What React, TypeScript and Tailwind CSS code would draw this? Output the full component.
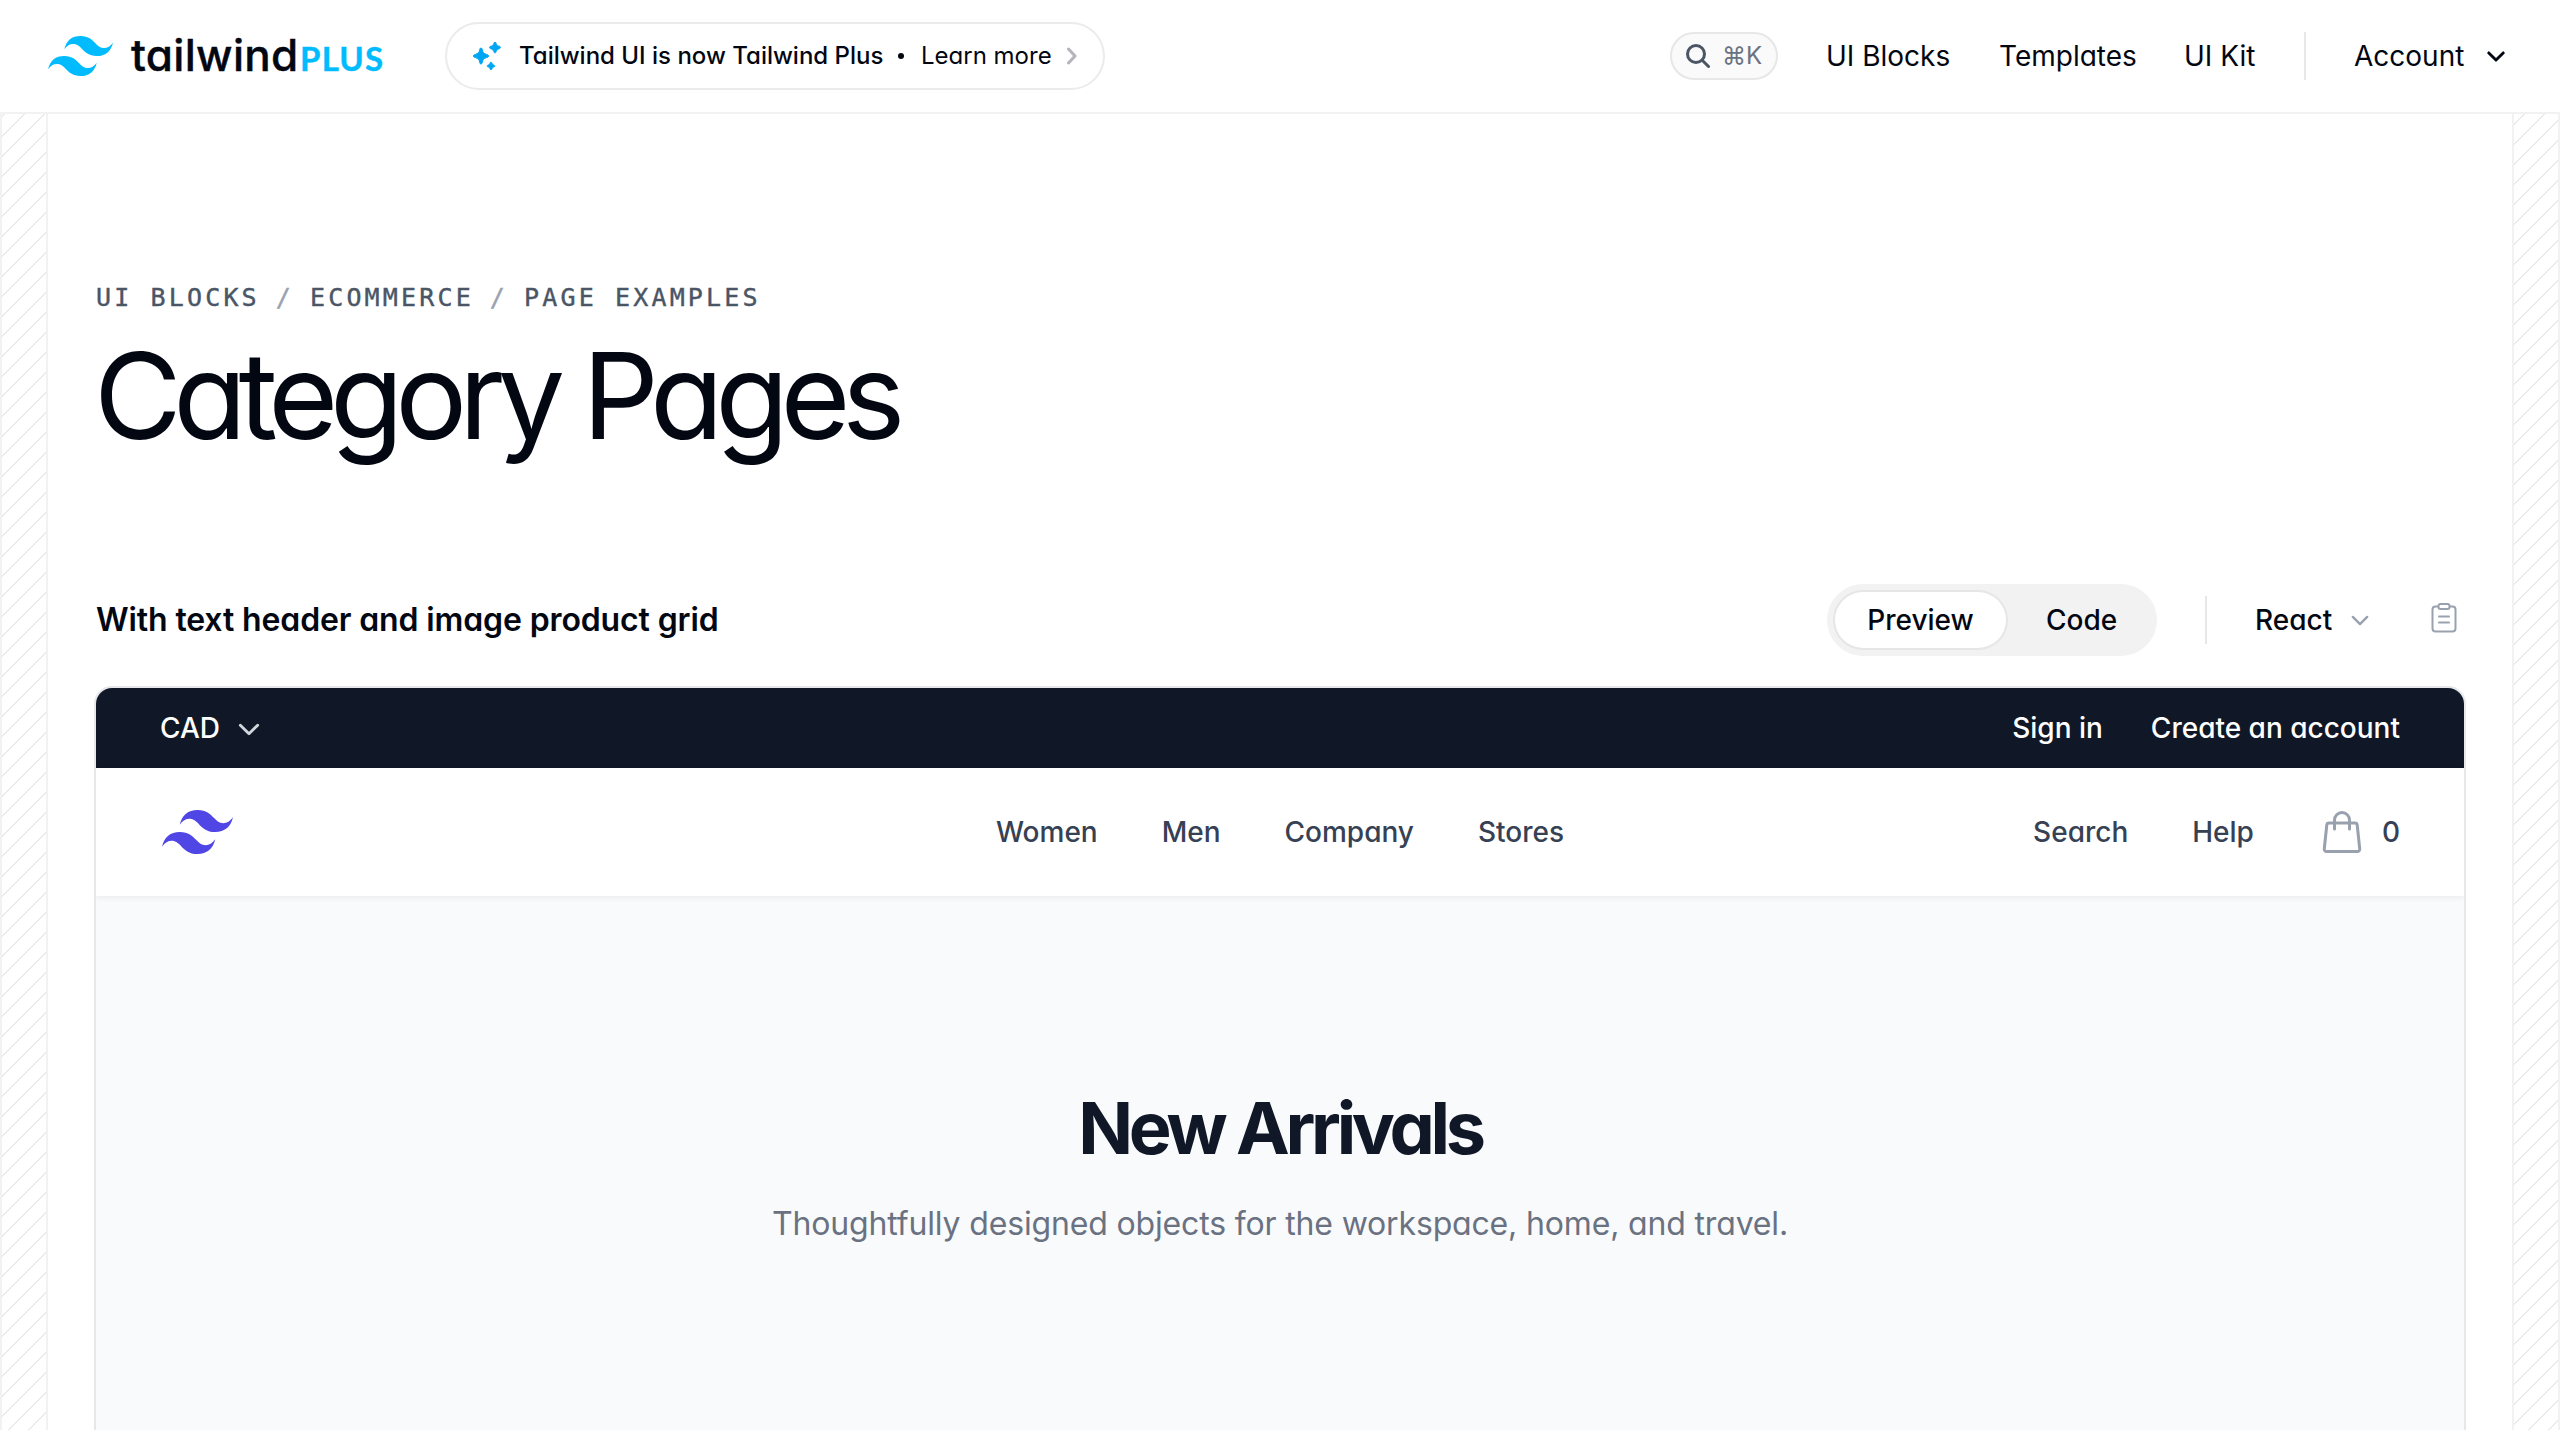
import React from "react";

const MARK =
  "M12 6C8.8 6 6.8 7.6 6 10.8c1.2-1.6 2.6-2.2 4.2-1.8.913.228 1.565.89 2.288 1.624C13.666 11.818 15.027 13.2 18 13.2c3.2 0 5.2-1.6 6-4.8-1.2 1.6-2.6 2.2-4.2 1.8-.913-.228-1.565-.89-2.288-1.624C16.334 7.382 14.973 6 12 6ZM6 13.2c-3.2 0-5.2 1.6-6 4.8 1.2-1.6 2.6-2.2 4.2-1.8.913.228 1.565.89 2.288 1.624C7.666 19.018 9.027 20.4 12 20.4c3.2 0 5.2-1.6 6-4.8-1.2 1.6-2.6 2.2-4.2 1.8-.913-.228-1.565-.89-2.288-1.624C10.334 14.582 8.973 13.2 6 13.2Z";

function Mark({ className }: { className: string }) {
  return (
    <svg viewBox="0 6 24 14.4" preserveAspectRatio="none" fill="currentColor" className={className}>
      <path d={MARK} />
    </svg>
  );
}

function Chevron({ className, width = 1.5 }: { className: string; width?: number }) {
  return (
    <svg viewBox="0 0 20 12" fill="none" stroke="currentColor" strokeWidth={width} strokeLinecap="round" strokeLinejoin="round" className={className}>
      <path d="M2 2l8 8 8-8" />
    </svg>
  );
}

function Header() {
  return (
    <header className="flex h-[114px] shrink-0 items-center border-b-2 border-[#f2f2f3] pr-12 pl-12">
      <div className="flex items-center">
        <Mark className="h-[40px] w-[65px] text-[#00bcff]" />
        <div className="mb-[2px] ml-[18px] flex h-14 items-baseline leading-[56px]">
          <span className="w-[169px] text-[44px] font-medium tracking-[0.3px] [-webkit-text-stroke:0.4px_currentColor]">tailwind</span>
          <span className="w-[84px] font-['Lato',sans-serif] text-[33px] font-bold tracking-[1.2px] text-[#00bcff] [-webkit-text-stroke:0.4px_currentColor]">PLUS</span>
        </div>
      </div>
      <a className="ml-[61px] flex h-[68px] w-[660px] items-center rounded-full border-2 border-[#ebebec] pl-[26px] text-2xl whitespace-nowrap">
        <svg viewBox="0 0 28 28" fill="#00a6f4" className="h-7 w-7">
          <path d="M8 6c.8 0 1 .5 1.300 2 .6 2.600 1.700 3.700 4.300 4.400 1.600.4 2 .8 2 1.600s-.4 1.200-2 1.600c-2.600.7-3.700 1.800-4.300 4.400C9 21.500 8.800 22 8 22s-1-.5-1.300-2C6.100 17.400 5 16.300 2.400 15.600.8 15.200.4 14.800.4 14s.4-1.200 2-1.600C5 11.700 6.100 10.600 6.700 8 7 6.500 7.200 6 8 6Z" stroke="#00a6f4" strokeWidth="1" />
          <path d="M22 0c.7 0 .9.500 1.200 1.400.5 1.500 1.200 2.200 2.700 2.700 1.100.4 1.600.7 1.600 1.400s-.5 1-1.600 1.400c-1.500.5-2.200 1.200-2.700 2.700-.3.900-.5 1.400-1.200 1.400s-.9-.5-1.200-1.400c-.5-1.500-1.200-2.200-2.700-2.700-1.100-.4-1.600-.7-1.600-1.400s.5-1 1.600-1.400c1.500-.5 2.200-1.200 2.700-2.700C21.100.5 21.300 0 22 0Z" stroke="#00a6f4" strokeWidth="0.8" />
          <path d="M18 20c.6 0 .8.400 1 1.100.4 1 .8 1.400 1.800 1.800.8.200 1.100.5 1.100 1.100s-.3.900-1.100 1.100c-1 .4-1.400.8-1.800 1.800-.2.700-.4 1.100-1 1.100s-.8-.4-1-1.100c-.4-1-.8-1.400-1.800-1.800-.8-.2-1.100-.5-1.100-1.100s.3-.9 1.100-1.100c1-.4 1.400-.8 1.800-1.800.2-.7.400-1.100 1-1.100Z" stroke="#00a6f4" strokeWidth="0.6" />
        </svg>
        <span className="ml-[18px] w-[364px] font-medium">Tailwind UI is now Tailwind Plus</span>
        <span className="ml-[15px] h-[6px] w-[6px] rounded-full bg-[#030712]" />
        <span className="ml-[17px] w-[132px]">Learn more</span>
        <svg viewBox="0 0 10 18" fill="none" stroke="#b3b5ba" strokeWidth="3" strokeLinecap="round" strokeLinejoin="round" className="ml-[14px] h-[18px] w-[10px]">
          <path d="M1.500 2l6.500 7-6.500 7" />
        </svg>
      </a>
      <nav className="ml-auto flex items-center text-[28px] whitespace-nowrap">
        <button className="flex h-12 w-[108px] items-center rounded-full border-2 border-[#e7e7e9] bg-[#fafafa] pl-[14px] text-[24px] text-[#6a7282]">
          <svg viewBox="0 0 24 24" fill="none" stroke="#4a5565" strokeWidth="3" strokeLinecap="round" className="h-6 w-6">
            <circle cx="10" cy="10" r="8.500" />
            <path d="M16.500 16.500l6 6" />
          </svg>
          <span className="ml-[12px]">⌘K</span>
        </button>
        <a className="ml-12 w-[125px]">UI Blocks</a>
        <a className="ml-12 w-[137px]">Templates</a>
        <a className="ml-12 w-[72px]">UI Kit</a>
        <span className="ml-12 h-12 w-[2px] bg-[#e5e7eb]" />
        <a className="ml-12 w-[109px]">Account</a>
        <Chevron width={3.2} className="mr-[7px] ml-[24px] h-[11px] w-[18px]" />
      </nav>
    </header>
  );
}

function Hatch() {
  return (
    <div className="w-12 border-x-2 border-[#f2f2f3] bg-[repeating-linear-gradient(315deg,#ebebec_0,#ebebec_2px,transparent_0,transparent_50%)] bg-[size:20px_20px] bg-fixed" />
  );
}

function PreviewPanel() {
  return (
    <div className="mt-8 flex flex-1 flex-col overflow-hidden rounded-t-2xl bg-white shadow-[0_0_0_2px_#e5e7eb]">
      <div className="flex h-20 shrink-0 items-center bg-[#101828] px-16 text-[28px] font-medium text-white">
        <span className="w-[62px]">CAD</span>
        <Chevron width={2.600} className="mt-[3px] ml-4 h-[13px] w-[22px] text-[#d1d5dc]" />
        <span className="ml-auto">Sign in</span>
        <span className="ml-12">Create an account</span>
      </div>
      <div className="relative z-10 grid h-32 shrink-0 grid-cols-3 items-center bg-white px-16 text-[28px] font-medium text-[#364153] shadow-[0_2px_6px_rgba(0,0,0,0.06)]">
        <Mark className="ml-[2px] h-11 w-[71px] text-[#4f46e5]" />
        <div className="flex justify-center gap-16">
          <span>Women</span>
          <span>Men</span>
          <span>Company</span>
          <span>Stores</span>
        </div>
        <div className="flex items-center justify-end">
          <span>Search</span>
          <span className="ml-16">Help</span>
          <svg viewBox="0 0 24 24" fill="none" stroke="#99a1af" strokeWidth="1.500" strokeLinecap="round" strokeLinejoin="round" className="ml-16 h-12 w-12">
            <path d="M15.750 10.500V6a3.750 3.750 0 1 0-7.500 0v4.500m11.356-1.993 1.263 12c.07.665-.45 1.243-1.119 1.243H4.250a1.125 1.125 0 0 1-1.120-1.243l1.264-12A1.125 1.125 0 0 1 5.513 7.500h12.974c.576 0 1.059.435 1.119 1.007Z" />
          </svg>
          <span className="ml-4">0</span>
        </div>
      </div>
      <div className="flex flex-1 flex-col items-center bg-[#f9fafb] pt-48">
        <h2 className="text-[72px] leading-20 font-bold tracking-[-4.3px] text-[#101828]">New Arrivals</h2>
        <p className="mt-8 text-[32px] leading-12 tracking-[-0.16px] text-[#6a7282]">Thoughtfully designed objects for the workspace, home, and travel.</p>
      </div>
    </div>
  );
}

export default function App() {
  return (
    <div className="flex h-[1430px] w-[2560px] flex-col overflow-hidden bg-white font-['Inter',sans-serif] text-[#030712] [font-feature-settings:'cv02','cv03','cv04','cv11']">
      <Header />
      <div className="flex min-h-0 flex-1">
        <Hatch />
        <main className="flex min-w-0 flex-1 flex-col px-12 pt-[160px]">
          <div className="flex items-center gap-4 font-['DejaVu_Sans_Mono',monospace] text-[25px] leading-12 tracking-[3.15px] text-[#4a5565] [-webkit-text-stroke:0.4px_currentColor]">
            <span>UI BLOCKS</span>
            <span className="text-[#99a1af]">/</span>
            <span>ECOMMERCE</span>
            <span className="text-[#99a1af]">/</span>
            <span>PAGE EXAMPLES</span>
          </div>
          <h1 className="mt-[14px] -ml-[2px] text-[120px] leading-[120px] tracking-[-8.3px]">Category Pages</h1>
          <div className="mt-[128px] flex h-[72px] items-center text-[28px] font-medium">
            <h2 className="text-[32px] font-semibold tracking-[-0.13px]">With text header and image product grid</h2>
            <div className="ml-auto flex h-[72px] w-[330px] items-center rounded-full bg-[#f2f2f2] p-2">
              <span className="flex h-14 w-[171px] items-center justify-center rounded-full bg-white shadow-[0_0_0_2px_#e6e6e7]">Preview</span>
              <span className="ml-[40px]">Code</span>
            </div>
            <span className="ml-12 h-12 w-[2px] bg-[#e5e7eb]" />
            <span className="ml-12 w-[79px]">React</span>
            <Chevron width={2.600} className="ml-[17px] h-[11px] w-[18px] text-[#99a1af]" />
            <svg viewBox="0 0 26 30" fill="none" stroke="#99a1af" strokeWidth="2" strokeLinecap="round" strokeLinejoin="round" className="mr-[7px] mb-[4px] ml-[62px] h-[30px] w-[26px]">
              <path d="M7 3.500H4.500A3 3 0 0 0 1.500 6.500V25.500A3 3 0 0 0 4.500 28.500H21.500A3 3 0 0 0 24.500 25.500V6.500A3 3 0 0 0 21.500 3.500H19" />
              <rect x="7.500" y="1" width="11" height="5" rx="2" />
              <path d="M8 13.500h10M8 19.500h10" />
            </svg>
          </div>
          <PreviewPanel />
        </main>
        <Hatch />
      </div>
    </div>
  );
}
